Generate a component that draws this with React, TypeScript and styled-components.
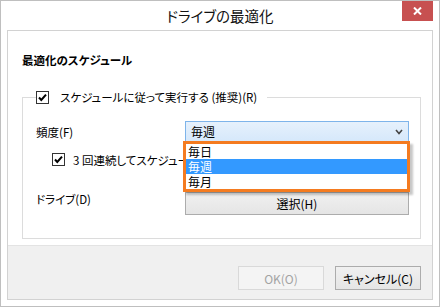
import React from 'react';
import styled, { createGlobalStyle } from 'styled-components';

const GlobalStyle = createGlobalStyle`
	html, body {
		margin: 0;
		padding: 0;
		background: #fff;
	}
	body {
		font-family: "Noto Sans CJK JP", "Noto Sans", sans-serif;
		font-feature-settings: "palt";
		color: #000;
	}
`;

const Window = styled.div`
	width: 440px;
	height: 307px;
	box-sizing: border-box;
	border: 1px solid #bfbfbf;
	background: #fff;
	display: flex;
	flex-direction: column;
	padding: 0 6px 6px;
`;

const TitleBar = styled.div`
	height: 29px;
	flex: none;
	display: grid;
	grid-template-columns: 1fr auto 1fr;
	align-items: start;
`;

const Title = styled.div`
	grid-column: 2;
	font-size: 14.5px;
	line-height: 30px;
	color: #111;
`;

const CloseButton = styled.div`
	grid-column: 3;
	justify-self: end;
	width: 31px;
	height: 20px;
	background: #c75050;
	display: flex;
	align-items: center;
	justify-content: center;
`;

const Client = styled.div`
	flex: 1;
	border: 1px solid #d2d2d2;
	display: flex;
	flex-direction: column;
	min-height: 0;
`;

const Body = styled.div`
	flex: 1;
	background: #fff;
	padding: 21px 11px 6px 14px;
`;

const Heading = styled.div`
	font-size: 11.5px;
	font-weight: bold;
	line-height: 16px;
`;

const GroupBox = styled.fieldset`
	margin: 21px 0 0;
	padding: 16px 11px 23px 13px;
	border: 1px solid #dcdcdc;
	min-width: 0;
`;

const Legend = styled.legend`
	padding: 0 10px 0 0;
	height: 16px;
	display: flex;
	align-items: center;
	gap: 11px;
	font-size: 11.5px;
	line-height: 16px;
`;

const FieldRow = styled.div<{ $top?: number; $align?: string }>`
	display: grid;
	grid-template-columns: 149px 1fr;
	align-items: ${p => p.$align || 'center'};
	margin-top: ${p => p.$top || 0}px;
	font-size: 11.5px;
	line-height: 14px;
`;

// the rest of this label sits under the open drop list
const CheckRow = styled.div`
	margin-top: 11px;
	height: 13px;
	max-width: 147px;
	padding-left: 16px;
	box-sizing: border-box;
	display: flex;
	align-items: center;
	gap: 8px;
	font-size: 11.5px;
	white-space: nowrap;
	overflow: hidden;
`;

const CheckBox = styled.svg`
	flex: none;
	display: block;
`;

const Combo = styled.div`
	position: relative;
	height: 21px;
	box-sizing: border-box;
	border: 1px solid #7eb4ea;
	background: linear-gradient(#e6f1fc, #d6e8fb);
	display: flex;
	align-items: center;
	justify-content: space-between;
	padding: 0 5px 0 5px;
	font-size: 12px;
`;

const DropList = styled.div`
	position: absolute;
	left: -3px;
	top: 19px;
	width: 227px;
	box-sizing: border-box;
	border: 3px solid #f47b20;
	background: #fff;
	z-index: 10;
	box-shadow: 3px 3px 2px rgba(0, 0, 0, 0.22);
`;

const Option = styled.div<{ $selected?: boolean }>`
	height: 15px;
	line-height: 15px;
	padding-left: 2px;
	font-size: 12px;
	background: ${p => (p.$selected ? '#3399ff' : '#fff')};
	color: ${p => (p.$selected ? '#fff' : '#000')};
`;

const Button = styled.div<{ $disabled?: boolean; $width?: string; $height?: number }>`
	width: ${p => p.$width || '86px'};
	height: ${p => p.$height || 24}px;
	box-sizing: border-box;
	border: 1px solid ${p => (p.$disabled ? '#d9d9d9' : '#acacac')};
	background: ${p =>
		p.$disabled ? '#f4f4f4' : 'linear-gradient(#f0f0f0, #e5e5e5)'};
	color: ${p => (p.$disabled ? '#a3a3a3' : '#000')};
	display: flex;
	align-items: center;
	justify-content: center;
	font-size: 12px;
`;

const Footer = styled.div`
	flex: none;
	height: 54px;
	box-sizing: border-box;
	border-top: 1px solid #e3e3e3;
	background: #f0f0f0;
	display: flex;
	justify-content: flex-end;
	align-items: flex-end;
	gap: 11px;
	padding: 0 11px 9px 0;
`;

const Check = () => (
	<CheckBox width="13" height="13" viewBox="0 0 13 13">
		<rect x="0.5" y="0.5" width="12" height="12" fill="#fff" stroke="#333" />
		<polyline
			points="3,6.5 5.3,9 10,3.6"
			fill="none"
			stroke="#000"
			strokeWidth="2"
		/>
	</CheckBox>
);

export default function App() {
	return (
		<>
			<GlobalStyle />
			<Window>
				<TitleBar>
					<Title>ドライブの最適化</Title>
					<CloseButton>
						<svg width="9" height="8" viewBox="0 0 9 8">
							<path d="M1 0.5 L8 7.5 M8 0.5 L1 7.5" stroke="#fff" strokeWidth="2" />
						</svg>
					</CloseButton>
				</TitleBar>
				<Client>
					<Body>
						<Heading>最適化のスケジュール</Heading>
						<GroupBox>
							<Legend>
								<Check />
								<span>スケジュールに従って実行する (推奨)(R)</span>
							</Legend>
							<FieldRow>
								<span>頻度(F)</span>
								<Combo>
									<span>毎週</span>
									<svg width="8" height="6" viewBox="0 0 8 6">
										<polyline points="1,1 4,4.5 7,1" fill="none" stroke="#444" strokeWidth="1.6" />
									</svg>
									<DropList>
										<Option>毎日</Option>
										<Option $selected>毎週</Option>
										<Option>毎月</Option>
									</DropList>
								</Combo>
							</FieldRow>
							<CheckRow>
								<Check />
								<span>3 回連続してスケジュー</span>
							</CheckRow>
							<FieldRow $top={26} $align="start">
								<span>ドライブ(D)</span>
								<Button $width="100%" $height={23}>選択(H)</Button>
							</FieldRow>
						</GroupBox>
					</Body>
					<Footer>
						<Button $disabled>OK(O)</Button>
						<Button>キャンセル(C)</Button>
					</Footer>
				</Client>
			</Window>
		</>
	);
}
